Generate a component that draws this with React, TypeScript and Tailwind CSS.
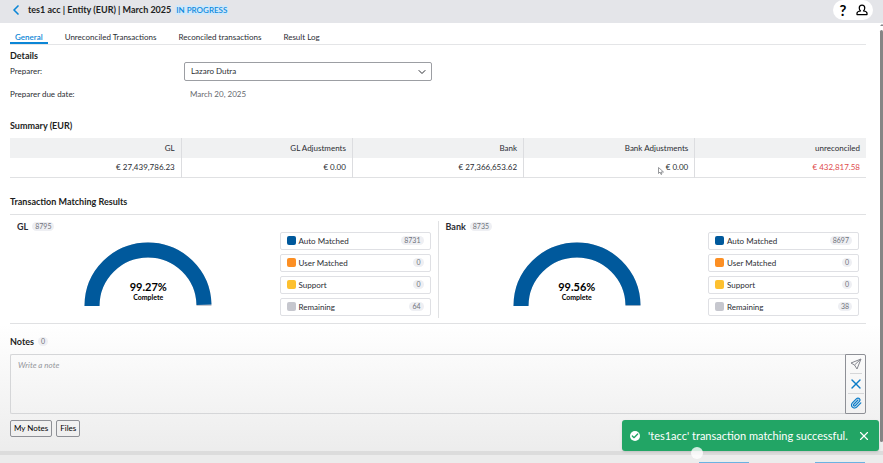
import React from 'react';
import { Check, ChevronDown, ChevronLeft, Paperclip, X } from 'lucide-react';

interface LegendItem {
  label: string;
  value: number;
  color: string;
}

interface MatchPanelProps {
  title: string;
  total: number;
  percent: number;
  items: LegendItem[];
}

const tabs = ['General', 'Unreconciled Transactions', 'Reconciled transactions', 'Result Log'];

const summary = [
  { label: 'GL', value: '€ 27,439,786.23' },
  { label: 'GL Adjustments', value: '€ 0.00' },
  { label: 'Bank', value: '€ 27,366,653.62' },
  { label: 'Bank Adjustments', value: '€ 0.00' },
  { label: 'unreconciled', value: '€ 432,817.58', negative: true },
];

const panels: MatchPanelProps[] = [
  {
    title: 'GL',
    total: 8795,
    percent: 99.27,
    items: [
      { label: 'Auto Matched', value: 8731, color: 'bg-[#00599c]' },
      { label: 'User Matched', value: 0, color: 'bg-[#fc8f23]' },
      { label: 'Support', value: 0, color: 'bg-[#fdc02f]' },
      { label: 'Remaining', value: 64, color: 'bg-[#c6c7ce]' },
    ],
  },
  {
    title: 'Bank',
    total: 8735,
    percent: 99.56,
    items: [
      { label: 'Auto Matched', value: 8697, color: 'bg-[#00599c]' },
      { label: 'User Matched', value: 0, color: 'bg-[#fc8f23]' },
      { label: 'Support', value: 0, color: 'bg-[#fdc02f]' },
      { label: 'Remaining', value: 38, color: 'bg-[#c6c7ce]' },
    ],
  },
];

const Count: React.FC<{ value: number }> = ({ value }) => (
  <span className="rounded-full bg-[#eeeff3] px-[3px] text-[7px] leading-[9px] font-normal text-[#70737b]">
    {value}
  </span>
);

const Gauge: React.FC<{ percent: number }> = ({ percent }) => (
  <div className="relative w-32">
    <svg viewBox="0 0 128 64" className="block w-full" fill="none" strokeWidth="15">
      <path d="M8 64a56 56 0 0 1 112 0" stroke="#c6c7ce" />
      <path
        d="M8 64a56 56 0 0 1 112 0"
        stroke="#00599c"
        pathLength={100}
        strokeDasharray={`${percent} 100`}
      />
    </svg>
    <div className="absolute inset-x-0 bottom-1 text-center text-black">
      <div className="text-[11px] leading-3 font-bold">{percent}%</div>
      <div className="text-[7px] leading-[9px] font-bold">Complete</div>
    </div>
  </div>
);

const MatchPanel: React.FC<MatchPanelProps> = ({ title, total, percent, items }) => (
  <section className="flex flex-1 px-[7px]">
    <div className="flex flex-1 flex-col">
      <h3 className="flex items-center gap-1 text-[9px] leading-3 font-bold">
        {title}
        <Count value={total} />
      </h3>
      <div className="flex flex-1 items-end justify-center pb-3">
        <Gauge percent={percent} />
      </div>
    </div>
    <ul className="mt-[11px] flex w-[151px] flex-col gap-1">
      {items.map((item) => (
        <li
          key={item.label}
          className="flex h-[18px] items-center rounded-[2px] border border-[#dfe0e4] bg-white px-1.5"
        >
          <span className={`mr-[3px] size-[9px] rounded-[2px] ${item.color}`} />
          <span className="flex-1 text-[8px] leading-3">{item.label}</span>
          <Count value={item.value} />
        </li>
      ))}
    </ul>
  </section>
);

const SendIcon = () => (
  <svg viewBox="0 0 24 24" className="size-3" fill="none" stroke="currentColor" strokeWidth="2" strokeLinejoin="round">
    <path d="M22 2 2 10l7 4 5 8 8-20ZM9 14 22 2" />
  </svg>
);

const UserIcon = () => (
  <svg viewBox="0 0 24 24" className="size-3" fill="none" stroke="currentColor" strokeWidth="2.5" strokeLinejoin="round">
    <path d="M12 2C8.500 2 6.500 4.500 6.500 8c0 2.500 1 4.500 2.500 6-4 .5-7 2-7 4.500V21h20v-2.500c0-2.500-3-4-7-4.500 1.500-1.500 2.500-3.500 2.500-6 0-3.500-2-6-5.500-6Z" />
  </svg>
);

const App: React.FC = () => (
  <div className="relative flex h-screen flex-col overflow-hidden bg-linear-to-b from-white from-70% to-[#ebebeb] font-['Lato',sans-serif] text-[8px] leading-3 text-[#2b2d33]">
    {/* Title bar */}
    <header className="flex h-[23px] shrink-0 items-center bg-[#e4e5e9] pr-2.5 pb-[3px] pl-2">
      <button type="button" aria-label="Back" className="text-[#0b86d6]">
        <ChevronLeft className="size-4" strokeWidth={2.5} />
      </button>
      <h1 className="ml-1 text-[9px] font-bold text-[#1d1e22]">
        tes1 acc | Entity (EUR) | March 2025
      </h1>
      <span className="ml-1 rounded-[2px] bg-[#d3e8f8] px-px text-[8px] leading-[10px] font-semibold text-[#0b8ae0]">
        IN PROGRESS
      </span>
      <div className="ml-auto flex h-5 items-center gap-2 rounded-full bg-white px-[5px] text-black">
        <button type="button" aria-label="Help" className="w-2.5 text-[15px] font-bold">
          ?
        </button>
        <button type="button" aria-label="Account">
          <UserIcon />
        </button>
      </div>
    </header>

    <main className="shrink-0 pr-[17px] pl-2.5">
      <nav className="flex h-[22px] gap-3 border-b border-[#e4e5e7] pt-1">
        {tabs.map((tab, i) => (
          <a
            key={tab}
            href="#"
            className={
              i === 0
                ? 'border-b-2 border-[#0b86d6] px-[5px] pt-1 font-semibold text-[#0b86d6]'
                : 'px-[5px] pt-1'
            }
          >
            {tab}
          </a>
        ))}
      </nav>

      {/* Details */}
      <h2 className="mt-[5px] text-[9px] font-bold text-[#1d1e22]">Details</h2>
      <div className="flex h-[18px] items-center">
        <label htmlFor="preparer" className="w-[174px]">
          Preparer:
        </label>
        <div className="relative w-[248px]">
          <select
            id="preparer"
            className="block h-[19px] w-full appearance-none rounded-[2px] border border-[#9c9ea3] bg-white px-1.5"
          >
            <option>Lazaro Dutra</option>
          </select>
          <ChevronDown className="pointer-events-none absolute top-1 right-1 size-3" />
        </div>
      </div>
      <div className="mt-2 flex">
        <span className="w-[180px]">Preparer due date:</span>
        <span className="text-[#66686e]">March 20, 2025</span>
      </div>

      {/* Summary */}
      <h2 className="mt-5 text-[9px] font-bold text-[#1d1e22]">Summary (EUR)</h2>
      <table className="mt-1.5 w-full table-fixed border-b border-[#e0e1e3] text-right">
        <thead>
          <tr className="h-5 bg-[#f0f1f2]">
            {summary.map((col) => (
              <th key={col.label} className="border-r border-[#dcdde0] px-1.5 font-normal last:border-r-0">
                {col.label}
              </th>
            ))}
          </tr>
        </thead>
        <tbody>
          <tr className="h-[19px]">
            {summary.map((col) => (
              <td
                key={col.label}
                className={`border-r border-[#dcdde0] px-1.5 last:border-r-0 ${col.negative ? 'text-[#e04c4c]' : ''}`}
              >
                {col.value}
              </td>
            ))}
          </tr>
        </tbody>
      </table>

      {/* Matching results */}
      <h2 className="mt-[18px] text-[9px] font-bold text-[#1d1e22]">Transaction Matching Results</h2>
      <div className="mt-1.5 flex h-[110px] divide-x divide-[#e0e1e3] border-y border-[#e0e1e3] pt-1.5 pb-[5px]">
        {panels.map((panel) => (
          <MatchPanel key={panel.title} {...panel} />
        ))}
      </div>

      {/* Notes */}
      <h2 className="mt-3 flex items-center gap-1 text-[9px] font-bold text-[#1d1e22]">
        <label htmlFor="note">Notes</label>
        <Count value={0} />
      </h2>
      <div className="mt-1.5 flex h-[60px]">
        <textarea
          id="note"
          placeholder="Write a note"
          className="flex-1 resize-none rounded-l-[2px] border border-r-0 border-[#d5d6d8] px-[7px] py-1 placeholder:text-[#94969b] placeholder:italic"
        />
        <div className="flex w-[21px] flex-col items-center divide-y divide-[#d5d6d8] rounded-r-[2px] border border-[#8e9096] text-[#0b7cc8]">
          <button type="button" aria-label="Send note" className="flex-1 text-[#85878f]">
            <SendIcon />
          </button>
          <button type="button" aria-label="Clear note" className="flex-1">
            <X className="size-4" strokeWidth={2} />
          </button>
          <button type="button" aria-label="Attach file" className="flex-1">
            <Paperclip className="size-3" strokeWidth={2.5} />
          </button>
        </div>
      </div>
      <div className="mt-1.5 flex gap-1 text-black">
        <button type="button" className="h-[17px] rounded-[2px] border border-[#8e9096] px-[3px]">
          My Notes
        </button>
        <button type="button" className="h-[17px] rounded-[2px] border border-[#8e9096] px-[3px]">
          Files
        </button>
      </div>
    </main>

    {/* Footer actions, cut off by the window */}
    <footer className="mt-auto flex h-3 shrink-0 items-end justify-end gap-[66px] border-t-4 border-[#dcdcdc] bg-[#ececec] pr-[18px]">
      <span className="h-px w-[50px] bg-[#6bb2e2]" />
      <span className="h-px w-[50px] bg-[#6bb2e2]" />
    </footer>

    {/* Scrollbar */}
    <div className="absolute top-[23px] right-0 bottom-0 flex w-[3px] flex-col items-center gap-1">
      <span className="mt-px border-x-2 border-b-2 border-x-transparent border-b-[#85868a]" />
      <span className="h-[412px] w-full rounded-full bg-[#858585]" />
    </div>

    {/* Toast */}
    <div
      role="status"
      className="absolute right-1 bottom-3 flex h-[31px] w-[257px] items-center rounded-[3px] bg-[#22a565] px-2 text-[11px] text-white shadow-sm"
    >
      <span className="mr-2 flex size-2.5 items-center justify-center rounded-full bg-white text-[#22a565]">
        <Check className="size-2" strokeWidth={4} />
      </span>
      <span className="flex-1 whitespace-nowrap">'tes1acc' transaction matching successful.</span>
      <button type="button" aria-label="Dismiss">
        <X className="size-3.5" strokeWidth={2} />
      </button>
    </div>
    <span className="absolute right-[180px] bottom-1 size-3 rounded-full bg-white/80" />

    {/* Pointer */}
    <svg viewBox="0 0 12 16" className="absolute top-[167px] left-[658px] h-2 w-1.5" fill="#fff" stroke="#77797e" strokeWidth="1.5">
      <path d="M1 1v12l3-3 2 5 2-1-2-4h5L1 1Z" />
    </svg>
  </div>
);

export default App;
